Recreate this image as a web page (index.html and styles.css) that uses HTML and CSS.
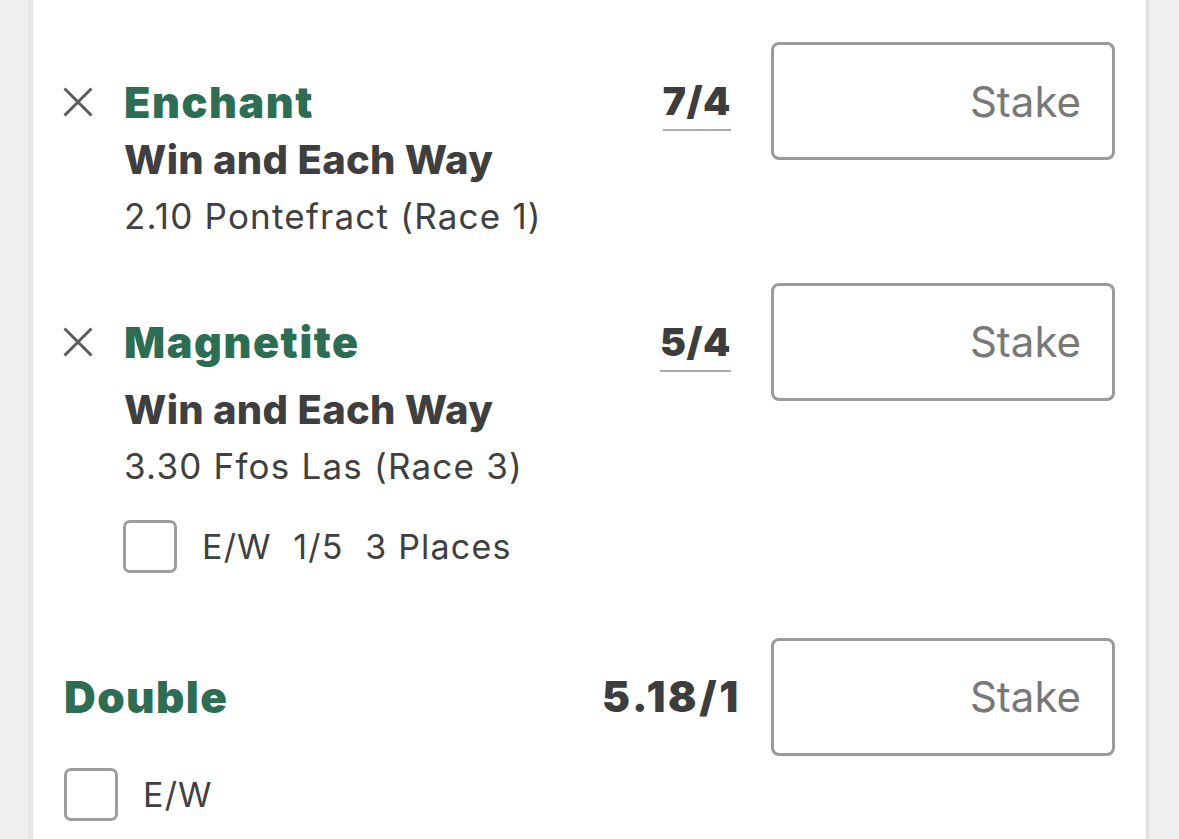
FILE: index.html
```html
<!DOCTYPE html>
<html lang="en">
<head>
<meta charset="utf-8">
<title>Bet slip</title>
<link rel="stylesheet" href="styles.css">
</head>
<body>
<div class="panel">
  <div class="sel">
    <div class="sel-main">
      <div class="sel-head">
        <span class="remove"><svg width="30" height="30" viewBox="0 0 30 30"><path d="M1.5 1.5 L28.5 28.5 M28.5 1.5 L1.5 28.5" stroke="#5b5b5b" stroke-width="3" fill="none"/></svg></span>
        <span class="name">Enchant</span>
      </div>
      <div class="market">Win and Each Way</div>
      <div class="event">2.10 Pontefract (Race 1)</div>
    </div>
    <div class="odds"><span class="price">7/4</span></div>
    <div class="stake">Stake</div>
  </div>

  <div class="sel sel-second">
    <div class="sel-main">
      <div class="sel-head">
        <span class="remove"><svg width="30" height="30" viewBox="0 0 30 30"><path d="M1.5 1.5 L28.5 28.5 M28.5 1.5 L1.5 28.5" stroke="#5b5b5b" stroke-width="3" fill="none"/></svg></span>
        <span class="name">Magnetite</span>
      </div>
      <div class="market market-spaced">Win and Each Way</div>
      <div class="event">3.30 Ffos Las (Race 3)</div>
      <div class="ew ew-sel">
        <span class="check"></span>
        <span class="ew-text">E/W&nbsp;&nbsp;1/5&nbsp;&nbsp;3 Places</span>
      </div>
    </div>
    <div class="odds"><span class="price">5/4</span></div>
    <div class="stake">Stake</div>
  </div>

  <div class="multi">
    <div class="multi-head">
      <span class="multi-name">Double</span>
      <span class="multi-odds">5.18/1</span>
      <div class="stake">Stake</div>
    </div>
    <div class="ew ew-multi">
      <span class="check"></span>
      <span class="ew-text">E/W</span>
    </div>
  </div>
</div>
</body>
</html>
```

FILE: styles.css
```css
* { box-sizing: border-box; }
html, body { margin: 0; padding: 0; height: 100%; overflow: hidden; }
body {
  background: #efefef;
  font-family: Inter, "Noto Sans", sans-serif;
  color: #404040;
}
.panel {
  margin-left: 28px;
  width: 1121px;
  min-height: 100%;
  background: #ffffff;
  border-left: 5px solid #e6e6e6;
  border-right: 3px solid #e3e3e3;
  padding: 42px 31px 0 30px;
}
.sel {
  display: flex;
  align-items: flex-start;
}
.sel-second { margin-top: 40px; }
.sel-main {
  flex: 1;
  padding-top: 30.5px;
}
.sel-head {
  display: flex;
  align-items: center;
  height: 58px;
}
.remove {
  width: 30px;
  height: 30px;
  display: flex;
}
.name {
  margin-left: 31px;
  font-size: 43px;
  font-weight: 900;
  letter-spacing: 1.6px;
  color: #2d6d53;
  line-height: 58px;
}
.market {
  padding-left: 61px;
  font-size: 40px;
  font-weight: 800;
  letter-spacing: 0.3px;
  line-height: 58px;
  color: #3f3f3f;
}
.market-spaced { margin-top: 10px; }
.event {
  padding-left: 61px;
  font-size: 35px;
  font-weight: 400;
  letter-spacing: 1.2px;
  line-height: 54px;
  color: #404040;
}
.odds {
  height: 118px;
  display: flex;
  align-items: center;
  margin-right: 40px;
}
.price {
  font-size: 39px;
  font-weight: 900;
  letter-spacing: 0.5px;
  line-height: 50px;
  color: #3d3d3d;
  text-decoration: underline;
  text-decoration-color: #aaaaaa;
  text-decoration-thickness: 2px;
  text-underline-offset: 14px;
}
.stake {
  width: 344px;
  height: 118px;
  border: 3px solid #9a9a9a;
  border-radius: 8px;
  display: flex;
  align-items: center;
  justify-content: flex-end;
  padding-right: 31px;
  font-size: 42px;
  color: #787878;
}
.ew {
  display: flex;
  align-items: center;
}
.ew-sel {
  margin-top: 26.5px;
  padding-left: 60px;
}
.check {
  width: 54px;
  height: 53px;
  border: 3px solid #9d9d9d;
  border-radius: 7px;
}
.ew-text {
  margin-left: 25px;
  font-size: 34px;
  letter-spacing: 1.2px;
  color: #404040;
}
.multi { margin-top: 65px; }
.multi-head {
  display: flex;
  align-items: center;
}
.multi-name {
  flex: 1;
  padding-left: 1px;
  font-size: 44px;
  font-weight: 900;
  letter-spacing: 1.4px;
  color: #2d6d53;
}
.multi-odds {
  margin-right: 30px;
  font-size: 42px;
  font-weight: 900;
  letter-spacing: 2.7px;
  color: #3d3d3d;
}
.ew-multi {
  margin-top: 12px;
  padding-left: 1px;
}
.ew-multi .ew-text { margin-left: 25px; }
```
